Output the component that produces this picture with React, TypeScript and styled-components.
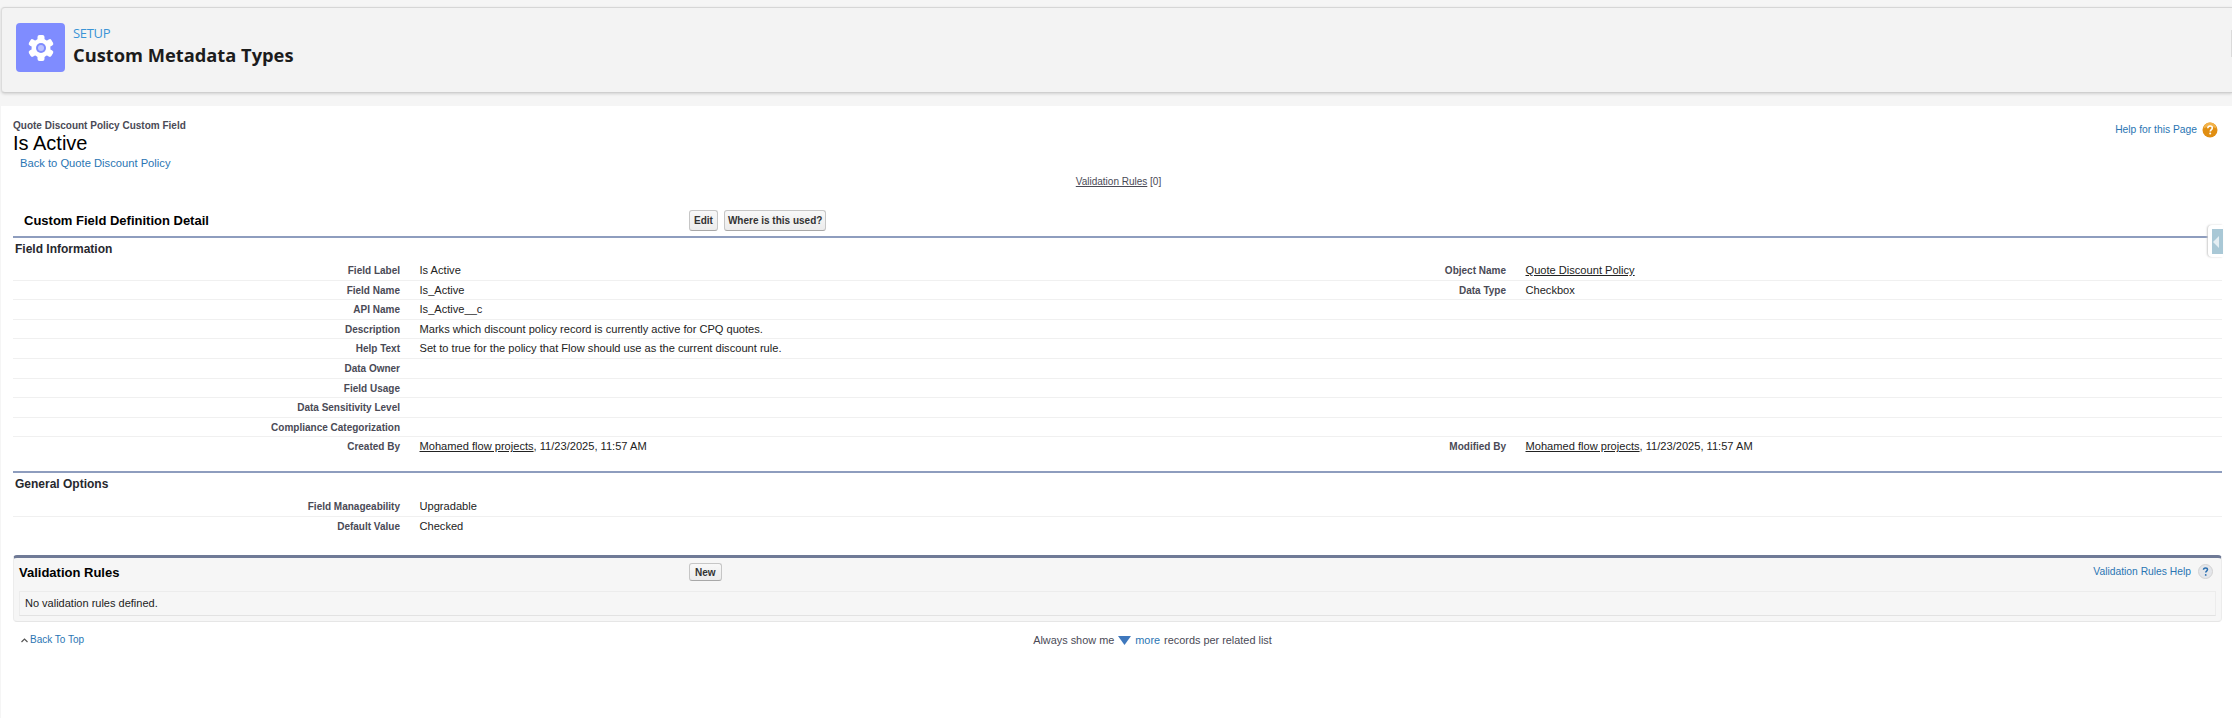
import { createGlobalStyle, styled } from 'styled-components'

interface IField {
  label: string
  value?: string
  link?: string
  rightLabel?: string
  rightValue?: string
  rightLink?: string
  last?: boolean
}

const GlobalStyle = createGlobalStyle`
  html, body {
    margin: 0;
    padding: 0;
    height: 718px;
    overflow: hidden;
    background: #f5f5f5;
    font-family: "Liberation Sans", Arial, sans-serif;
  }
`

const Page = styled.div`
  position: relative;
  width: 2232px;
  height: 718px;
  overflow: hidden;
  padding-top: 7px;
  box-sizing: border-box;
`
const HeaderCard = styled.header`
  height: 86px;
  box-sizing: border-box;
  margin-left: 1px;
  padding: 15px 14px;
  display: flex;
  gap: 8px;
  background: #f3f3f3;
  border-top: 1px solid #d6d6d6;
  border-bottom: 1px solid #cfcfcf;
  border-left: 1px solid #dcdcdc;
  border-radius: 4px 0 0 4px;
  box-shadow: 0 1px 3px rgba(0, 0, 0, 0.15);
`
const IconBox = styled.div`
  width: 49px;
  height: 49px;
  border-radius: 4px;
  background: #7f8cff;
  display: flex;
  align-items: center;
  justify-content: center;
`
const HeaderText = styled.div`
  display: flex;
  flex-direction: column;
`
const Eyebrow = styled.span`
  font: 13px/20px "Open Sans", sans-serif;
  color: #3a94d6;
  letter-spacing: -0.3px;
`
const PageTitle = styled.h1`
  margin: -1px 0 0;
  font: 700 18.3px/26px "Open Sans", sans-serif;
  color: #1c1c1c;
`
const EdgeTab = styled.div`
  position: absolute;
  right: 0;
  top: 30px;
  width: 1px;
  height: 27px;
  background: #dadada;
`
const Content = styled.main`
  margin: 13px 0 0 1px;
  height: 612px;
  box-sizing: border-box;
  background: #fff;
  padding: 14px 10px 0 12px;
`
const TitleRow = styled.div`
  display: flex;
  justify-content: space-between;
`
const ObjectName = styled.div`
  font-size: 10px;
  line-height: 12px;
  font-weight: 700;
  color: #4a4a56;
`
const FieldTitle = styled.h2`
  margin: 0;
  font-size: 20px;
  line-height: 23px;
  font-weight: 400;
  color: #000;
`
const BackLink = styled.a`
  display: block;
  margin: 2px 0 0 7px;
  font-size: 11.2px;
  line-height: 13px;
  color: #2a75b3;
`
const HelpRow = styled.div`
  display: flex;
  align-items: center;
  gap: 5px;
  margin: 1px 4px 0 0;
  height: 17px;
`
const HelpLink = styled.a`
  font-size: 10.3px;
  color: #2a75b3;
`
const HoverLinks = styled.div`
  margin-top: 6px;
  text-align: center;
  padding-left: 2px;
  font-size: 10px;
  line-height: 12px;
  color: #4a4a56;
`
const HoverLink = styled.span`
  text-decoration: underline;
`
const DetailHeader = styled.div`
  display: flex;
  align-items: center;
  height: 33px;
  margin-top: 17px;
  padding-bottom: 1px;
  border-bottom: 2px solid #8e9dbe;
  box-sizing: border-box;
`
const DetailTitle = styled.h3`
  margin: 0 0 0 11px;
  width: 665px;
  font-size: 13px;
  font-weight: 700;
  color: #000;
`
const Buttons = styled.div`
  display: flex;
  gap: 6px;
`
const Button = styled.button`
  height: 21px;
  padding: 0 4px;
  border: 1px solid #c6c6c6;
  border-bottom-color: #a8a8a8;
  border-radius: 3px;
  background: linear-gradient(#f8f8f8, #ececec);
  font: 700 10px "Liberation Sans", Arial, sans-serif;
  color: #333;
`
const WideButton = styled(Button)`
  padding: 0 3px;
`
const SectionTitle = styled.h4<{ $height?: number }>`
  margin: 0;
  height: ${(p) => p.$height ?? 23}px;
  padding-left: 2px;
  font-size: 12px;
  line-height: 22px;
  font-weight: 700;
  color: #27282e;
`
const Row = styled.div<{ $last?: boolean }>`
  display: grid;
  grid-template-columns: 387px 600px 506px 1fr;
  grid-template-rows: 19px;
  height: 19.6px;
  box-sizing: border-box;
  border-bottom: ${(p) => (p.$last ? 'none' : '1px solid #f0f0f0')};
`
const Label = styled.div`
  text-align: right;
  font-size: 10px;
  line-height: 19px;
  font-weight: 700;
  color: #4a4a56;
`
const Value = styled.div`
  padding-left: 19.5px;
  font-size: 11.1px;
  line-height: 19px;
  color: #222;
  white-space: nowrap;
`
const Underlined = styled.span`
  text-decoration: underline;
`
const Divider = styled.div`
  margin-top: 14px;
  border-top: 2px solid #8e9dbe;
`
const RelatedBlock = styled.section`
  margin-top: 19px;
  height: 67px;
  box-sizing: border-box;
  background: #f6f6f6;
  border-top: 3px solid #6f7a96;
  border-right: 1px solid #ececec;
  border-bottom: 1px solid #e6e6e6;
  border-left: 1px solid #ececec;
  border-radius: 4px;
  padding: 0 5px;
`
const RelatedHeader = styled.div`
  display: flex;
  align-items: center;
  height: 33px;
  padding-bottom: 5px;
  box-sizing: border-box;
`
const RelatedTitle = styled.h3`
  margin: 0;
  width: 670px;
  font-size: 13px;
  font-weight: 700;
  color: #000;
`
const NewButton = styled(Button)`
  height: 18px;
  padding: 0 5px;
`
const RelatedHelp = styled.div`
  margin-left: auto;
  display: flex;
  align-items: center;
  gap: 7px;
  padding: 0 3px 1px 0;
`
const EmptyBox = styled.div`
  height: 25px;
  box-sizing: border-box;
  border: 1px solid #ececec;
  border-bottom-color: #e2e2e2;
  padding-left: 5px;
  font-size: 11px;
  line-height: 23px;
  color: #222;
`
const FooterRow = styled.div`
  margin-top: 10px;
  display: grid;
  grid-template-columns: 1fr auto 1fr;
  font-size: 10.9px;
  line-height: 16px;
  color: #4a4a56;
`
const TopLink = styled.a`
  display: flex;
  align-items: center;
  gap: 2px;
  margin-left: 8px;
  font-size: 10px;
  color: #2a75b3;
`
const RecordsText = styled.div`
  display: flex;
  align-items: center;
  gap: 4px;
  padding-left: 70px;
`
const MoreLink = styled.a`
  color: #2a75b3;
`
const SideTab = styled.div`
  position: absolute;
  right: 9px;
  top: 225px;
  width: 15px;
  height: 32px;
  box-sizing: border-box;
  padding: 4px 0 3px 4px;
  background: #fff;
  border-radius: 4px 0 0 4px;
  box-shadow: -1px 0 2px #ccc;
`
const SideTabInner = styled.div`
  height: 100%;
  background: #a9c8d6;
  display: flex;
  align-items: center;
`

const GearIcon = () => (
  <svg width="28" height="28" viewBox="0 0 28 28">
    <g fill="#fff">
      {[0, 60, 120, 180, 240, 300].map((angle) => (
        <rect key={angle} x="10.5" y="1" width="7" height="7" rx="2" transform={`rotate(${angle} 14 14)`} />
      ))}
      <circle cx="14" cy="14" r="9.5" />
    </g>
    <circle cx="14" cy="14" r="5" fill="#7f8cff" />
    <circle cx="14" cy="14" r="3" fill="#f0f1ff" opacity="0.55" />
  </svg>
)

const OrangeHelp = () => (
  <svg width="16" height="16" viewBox="0 0 16 16">
    <circle cx="8" cy="8" r="7.5" fill="#e08e12" />
    <path d="M1.5 6.5a6.5 6 0 0 1 13 0a9 6 0 0 0-13 0z" fill="#f2b24a" />
    <path d="M5.8 6.2c0-1.4 1-2.2 2.3-2.2s2.2.8 2.2 1.9c0 1.7-2 1.7-2 3.5" fill="none" stroke="#fff" strokeWidth="1.6" />
    <circle cx="8.2" cy="11.6" r="1" fill="#fff" />
  </svg>
)

const GreyHelp = () => (
  <svg width="15" height="15" viewBox="0 0 15 15">
    <circle cx="7.5" cy="7.5" r="7" fill="#e4e6ea" stroke="#d2d2d2" />
    <path d="M5.5 5.8c0-1.2.9-1.9 2-1.9s2 .7 2 1.7c0 1.5-1.8 1.5-1.8 3" fill="none" stroke="#2a6fb0" strokeWidth="1.5" />
    <circle cx="7.7" cy="10.9" r="0.9" fill="#2a6fb0" />
  </svg>
)

const fieldRows: IField[] = [
  { label: 'Field Label', value: 'Is Active', rightLabel: 'Object Name', rightLink: 'Quote Discount Policy' },
  { label: 'Field Name', value: 'Is_Active', rightLabel: 'Data Type', rightValue: 'Checkbox' },
  { label: 'API Name', value: 'Is_Active__c' },
  { label: 'Description', value: 'Marks which discount policy record is currently active for CPQ quotes.' },
  { label: 'Help Text', value: 'Set to true for the policy that Flow should use as the current discount rule.' },
  { label: 'Data Owner' },
  { label: 'Field Usage' },
  { label: 'Data Sensitivity Level' },
  { label: 'Compliance Categorization' },
  {
    label: 'Created By',
    link: 'Mohamed flow projects',
    value: ', 11/23/2025, 11:57 AM',
    rightLabel: 'Modified By',
    rightLink: 'Mohamed flow projects',
    rightValue: ', 11/23/2025, 11:57 AM',
    last: true,
  },
]

const FieldRow = ({ label, value, link, rightLabel, rightValue, rightLink, last }: IField) => (
  <Row $last={last}>
    <Label>{label}</Label>
    <Value>
      {link && <Underlined>{link}</Underlined>}
      {value}
    </Value>
    <Label>{rightLabel}</Label>
    <Value>
      {rightLink && <Underlined>{rightLink}</Underlined>}
      {rightValue}
    </Value>
  </Row>
)

export default function App() {
  return (
    <Page>
      <GlobalStyle />
      <HeaderCard>
        <IconBox>
          <GearIcon />
        </IconBox>
        <HeaderText>
          <Eyebrow>SETUP</Eyebrow>
          <PageTitle>Custom Metadata Types</PageTitle>
        </HeaderText>
      </HeaderCard>
      <EdgeTab />
      <Content>
        <TitleRow>
          <div>
            <ObjectName>Quote Discount Policy Custom Field</ObjectName>
            <FieldTitle>Is Active</FieldTitle>
            <BackLink>Back to Quote Discount Policy</BackLink>
          </div>
          <HelpRow>
            <HelpLink>Help for this Page</HelpLink>
            <OrangeHelp />
          </HelpRow>
        </TitleRow>
        <HoverLinks>
          <HoverLink>Validation Rules</HoverLink> [0]
        </HoverLinks>
        <DetailHeader>
          <DetailTitle>Custom Field Definition Detail</DetailTitle>
          <Buttons>
            <Button>Edit</Button>
            <WideButton>Where is this used?</WideButton>
          </Buttons>
        </DetailHeader>
        <SectionTitle>Field Information</SectionTitle>
        {fieldRows.map((row) => (
          <FieldRow key={row.label} {...row} />
        ))}
        <Divider />
        <SectionTitle $height={24}>General Options</SectionTitle>
        <FieldRow label="Field Manageability" value="Upgradable" />
        <FieldRow label="Default Value" value="Checked" last />
        <RelatedBlock>
          <RelatedHeader>
            <RelatedTitle>Validation Rules</RelatedTitle>
            <NewButton>New</NewButton>
            <RelatedHelp>
              <HelpLink>Validation Rules Help</HelpLink>
              <GreyHelp />
            </RelatedHelp>
          </RelatedHeader>
          <EmptyBox>No validation rules defined.</EmptyBox>
        </RelatedBlock>
        <FooterRow>
          <TopLink>
            <svg width="7" height="5" viewBox="0 0 7 5">
              <path d="M.5 4 3.5 1l3 3" fill="none" stroke="#555" strokeWidth="1.2" />
            </svg>
            Back To Top
          </TopLink>
          <RecordsText>
            Always show me
            <svg width="13" height="9" viewBox="0 0 13 9">
              <path d="M0 0h13L6.5 9z" fill="#3f78bd" />
            </svg>
            <MoreLink>more</MoreLink> records per related list
          </RecordsText>
          <div />
        </FooterRow>
      </Content>
      <SideTab>
        <SideTabInner>
          <svg width="8" height="12" viewBox="0 0 8 12">
            <path d="M7 0v12L1 6z" fill="#e4eef3" />
          </svg>
        </SideTabInner>
      </SideTab>
    </Page>
  )
}
